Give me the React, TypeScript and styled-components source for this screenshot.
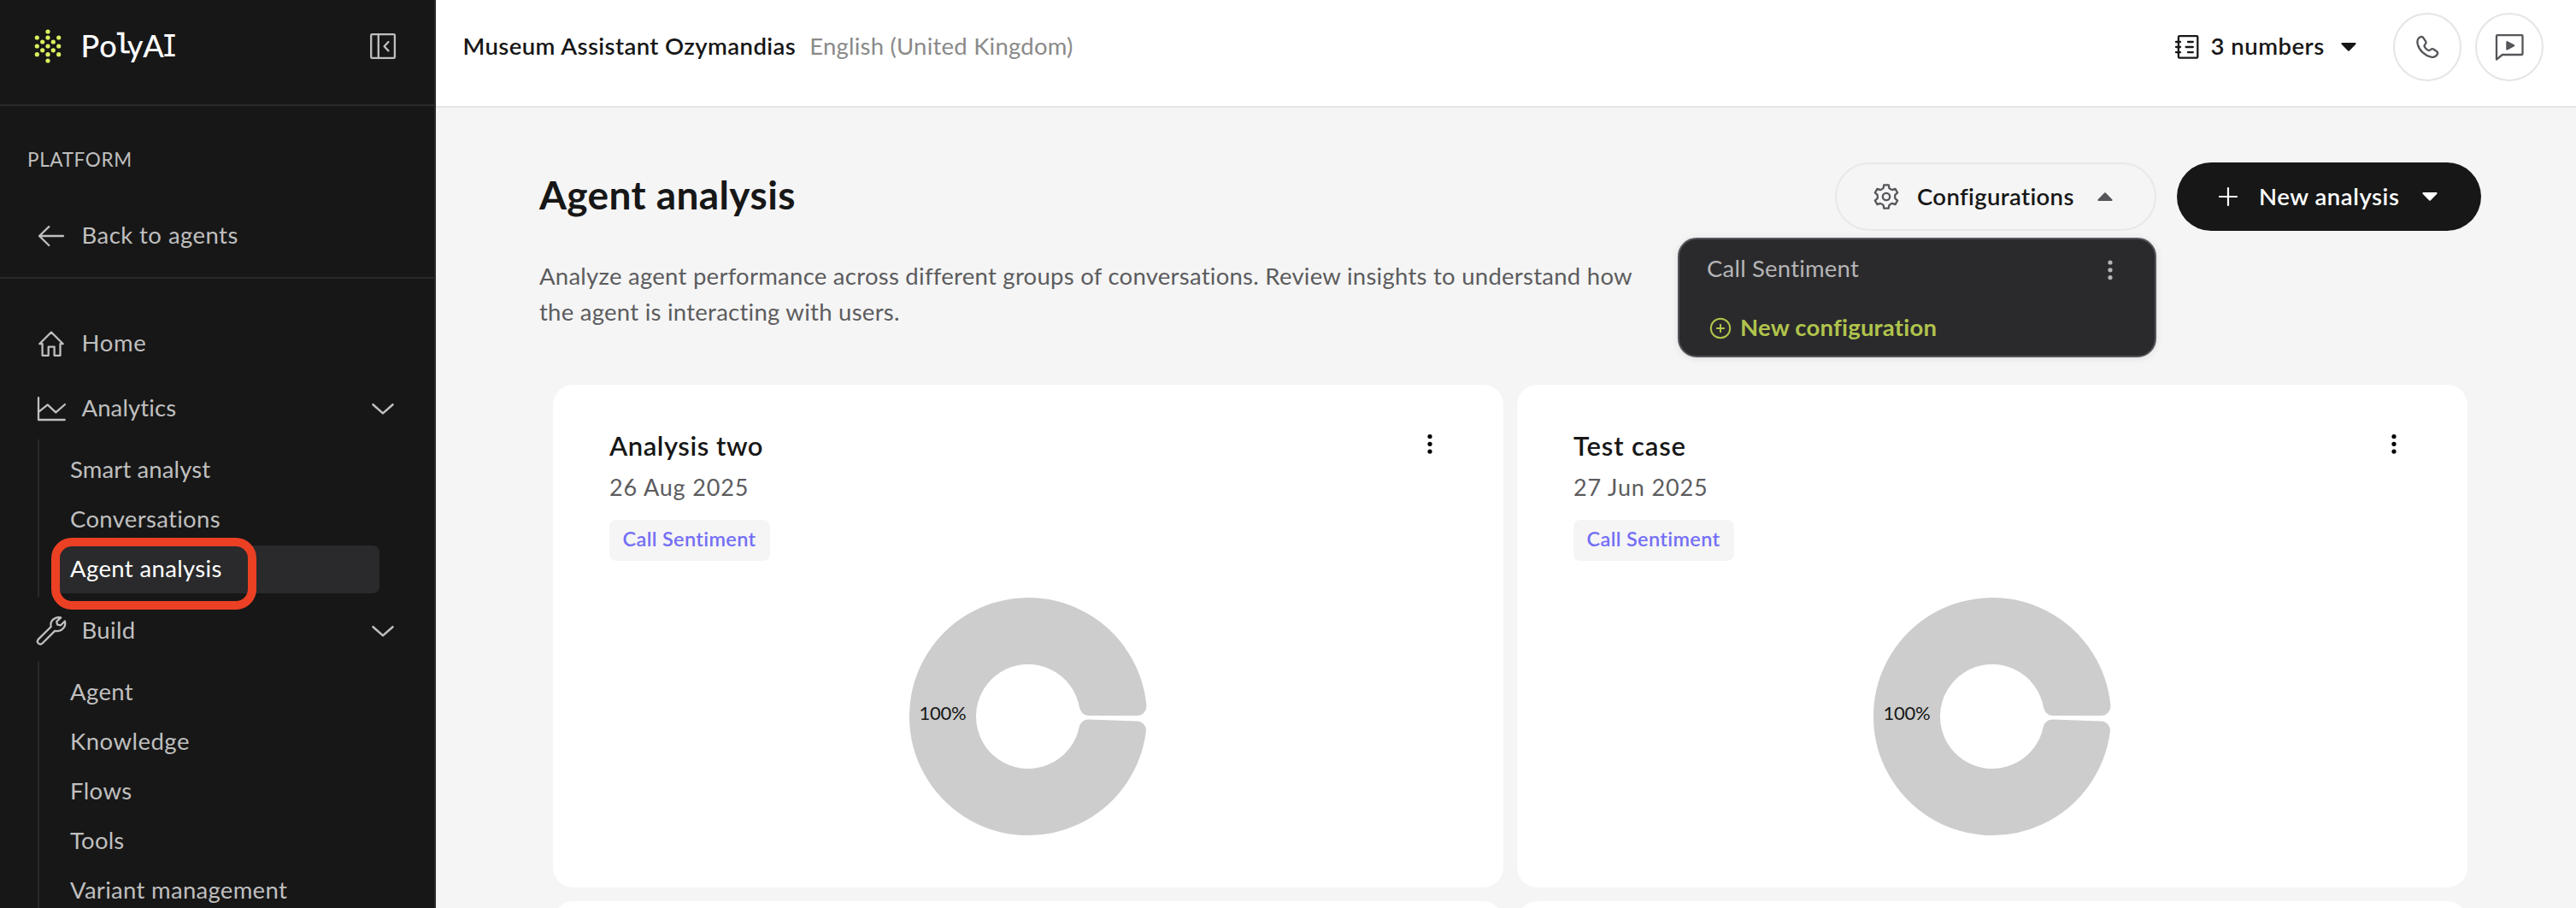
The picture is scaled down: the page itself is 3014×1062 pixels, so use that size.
import React from "react";
import styled, { createGlobalStyle } from "styled-components";

const GlobalStyle = createGlobalStyle`
  *, *::before, *::after { box-sizing: border-box; }
  body { margin: 0; background: #f5f5f5; font-family: Lato, "Open Sans", sans-serif; }
  button { font: inherit; border: 0; background: none; padding: 0; color: inherit; }
  h1, h2, p { margin: 0; font-weight: 400; }
  svg { display: block; flex: none; overflow: visible; }
`;

const Shell = styled.div`
  display: flex;
  width: 3014px;
  height: 1062px;
  overflow: hidden;
`;

/* ---------- Sidebar ---------- */

const Sidebar = styled.aside`
  flex: none;
  width: 510px;
  height: 100%;
  overflow: hidden;
  background: #171717;
  border-right: 2px solid #2a2a2c;
  color: #bfbfbf;
`;

const Brand = styled.div`
  display: flex;
  align-items: center;
  height: 124px;
  padding: 0 43px 14px 40px;
  border-bottom: 2px solid #2a2a2c;
`;

const Wordmark = styled.div`
  display: flex;
  margin: 0 auto 0 23px;
  padding-bottom: 2px;
  color: #fff;
  line-height: 44px;
`;

const Glyph = styled.span<{ $w: number; $face?: string; $size?: number; $weight?: number; $edge?: number }>`
  display: flex;
  justify-content: center;
  align-items: baseline;
  width: ${(p) => p.$w}px;
  font-family: ${(p) => p.$face ?? "Lato"}, sans-serif;
  font-size: ${(p) => p.$size ?? 36}px;
  font-weight: ${(p) => p.$weight ?? 500};
  font-feature-settings: "cv08";
  -webkit-text-stroke: ${(p) => p.$edge ?? 0}px #fff;
`;

const PlatformSection = styled.section`
  height: 202px;
  padding: 49px 42px 0 32px;
  border-bottom: 2px solid #2a2a2c;
`;

const SectionLabel = styled.div`
  margin-bottom: 47px;
  font-size: 22.5px;
  line-height: 28px;
  letter-spacing: 0.65px;
`;

const Label = styled.span<{ $ls: number }>`
  font-size: 27.5px;
  letter-spacing: ${(p) => p.$ls}px;
  white-space: nowrap;
`;

const NavRow = styled.div<{ $flush?: boolean }>`
  display: flex;
  align-items: center;
  height: 56px;
  padding: ${(p) => (p.$flush ? "0 0 0 11px" : "0 43px")};
  ${Label} {
    margin: 0 auto 0 18.5px;
    padding-bottom: 2.5px;
  }
`;

const Nav = styled.nav`
  padding-top: 48px;
`;

const Spacer = styled.div<{ $h: number }>`
  height: ${(p) => p.$h}px;
`;

const SubNav = styled.div`
  display: flex;
  flex-direction: column;
  gap: 2px;
  margin: 8px 64px 12px 44px;
  padding: 8px 0 4px 20px;
  border-left: 2px solid #2a2a2c;
`;

const SubItem = styled.div<{ $active?: boolean }>`
  position: relative;
  display: flex;
  align-items: center;
  height: 56px;
  padding: 0 0 3.5px 16px;
  border-radius: 8px;
  background: ${(p) => (p.$active ? "#2a2a2c" : "transparent")};
  color: ${(p) => (p.$active ? "#fff" : "inherit")};
`;

const Highlight = styled.span`
  position: absolute;
  left: -6px;
  top: -9px;
  width: 240px;
  height: 84px;
  border: 10px solid #ec4024;
  border-radius: 24px;
`;

/* ---------- Main area ---------- */

const Main = styled.main`
  flex: 1;
  min-width: 0;
  display: flex;
  flex-direction: column;
`;

const TopBar = styled.header`
  flex: none;
  display: flex;
  align-items: center;
  height: 126px;
  padding: 0 38px 14px 31.5px;
  background: #fff;
  border-bottom: 2px solid #e5e5e5;
`;

const AgentName = styled.span`
  padding-bottom: 4px;
  font-size: 27.5px;
  font-weight: 600;
  letter-spacing: 0.42px;
  color: #171717;
`;

const Locale = styled.span`
  margin: 0 auto 0 16px;
  padding-bottom: 4px;
  font-size: 27.5px;
  letter-spacing: 0.22px;
  color: #8a8a8a;
`;

const NumbersButton = styled.button`
  display: flex;
  align-items: center;
  width: 214px;
  margin-right: 43px;
  color: #171717;
  span {
    margin: 0 auto 0 11.5px;
    padding-bottom: 3px;
    font-size: 27.5px;
    font-weight: 600;
    letter-spacing: 0.5px;
  }
`;

const CircleButton = styled.button`
  display: flex;
  align-items: center;
  justify-content: center;
  width: 80px;
  height: 80px;
  border: 2px solid #e5e5e5;
  border-radius: 50%;
  color: #55555a;
  & + & { margin-left: 16px; }
`;

const Content = styled.div`
  flex: 1;
  min-height: 0;
  overflow: hidden;
  padding: 64px 111px 0 121px;
`;

const TitleRow = styled.div`
  display: flex;
  align-items: center;
  height: 80px;
`;

const Title = styled.h1`
  margin-right: auto;
  padding-bottom: 6px;
  font-size: 46px;
  font-weight: 700;
  letter-spacing: 0.4px;
  color: #171717;
`;

const Description = styled.p`
  width: 1300px;
  height: 148px;
  margin-top: 32px;
  font-size: 27.5px;
  line-height: 41.6px;
  letter-spacing: 0.26px;
  color: #5c5c5e;
`;

const MenuAnchor = styled.div`
  position: relative;
  margin-right: 24px;
`;

const PillButton = styled.button<{ $dark?: boolean }>`
  display: flex;
  align-items: center;
  width: ${(p) => (p.$dark ? 356 : 376)}px;
  height: 80px;
  padding: ${(p) => (p.$dark ? "0 51px 0 47px" : "0 49px 0 42px")};
  border: ${(p) => (p.$dark ? "0" : "2px solid #e8e8e8")};
  border-radius: 40px;
  background: ${(p) => (p.$dark ? "#171717" : "transparent")};
  color: ${(p) => (p.$dark ? "#fff" : "#171717")};
  font-size: 27.5px;
  font-weight: 600;
  letter-spacing: ${(p) => (p.$dark ? 0.55 : 0.35)}px;
  span {
    margin: 0 auto 0 ${(p) => (p.$dark ? 23 : 20)}px;
    padding-bottom: 1px;
  }
`;

const Menu = styled.div`
  position: absolute;
  z-index: 2;
  top: 88px;
  right: 0;
  width: 560px;
  height: 140px;
  padding: 0 38px 0 32px;
  border: 2px solid #55555c;
  border-radius: 22px;
  background: #2a2a2c;
  box-shadow: 0 1px 8px rgba(0, 0, 0, 0.1);
`;

const MenuItem = styled.div<{ $accent?: boolean }>`
  display: flex;
  align-items: center;
  height: 68px;
  color: ${(p) => (p.$accent ? "#b0c44c" : "#b5b5b6")};
  font-size: 27.5px;
  font-weight: ${(p) => (p.$accent ? 700 : 400)};
  letter-spacing: ${(p) => (p.$accent ? 0.2 : 0.2)}px;
  span {
    margin-right: auto;
    padding-bottom: ${(p) => (p.$accent ? 0 : 1)}px;
  }
  svg + span { margin-left: 10px; }
`;

/* ---------- Cards ---------- */

const CardGrid = styled.div`
  display: grid;
  grid-template-columns: repeat(2, 1112px);
  grid-auto-rows: 588px;
  gap: 16px;
  padding: 0 16px;
`;

const Card = styled.article`
  display: flex;
  flex-direction: column;
  padding: 52px 66px 0;
  border-radius: 24px;
  background: #fff;
`;

const CardHead = styled.div`
  display: flex;
  align-items: center;
  justify-content: space-between;
  height: 40px;
`;

const CardTitle = styled.h2<{ $ls: number }>`
  font-size: 31px;
  line-height: 40px;
  padding-bottom: 2px;
  font-weight: 600;
  letter-spacing: ${(p) => p.$ls}px;
  color: #171717;
`;

const CardDate = styled.div`
  margin: 12px 0 22px;
  font-size: 27px;
  line-height: 32px;
  letter-spacing: 0.85px;
  color: #5c5c5e;
`;

const Tag = styled.span`
  align-self: flex-start;
  width: 188px;
  height: 48px;
  padding-left: 15.5px;
  border-radius: 8px;
  background: #f5f5f5;
  font-size: 23.5px;
  line-height: 44px;
  font-weight: 600;
  letter-spacing: 0.36px;
  color: #746ff5;
`;

const ChartBox = styled.div`
  display: flex;
  justify-content: center;
  margin-top: 41px;
`;

/* ---------- Drawings ---------- */

const dots = [
  [16, 3], [3.3, 10], [16, 10], [28.7, 10], [9.7, 15], [22.3, 15], [3.3, 20], [16, 20],
  [28.7, 20], [9.7, 24.8], [22.3, 24.8], [3.3, 29.7], [16, 29.7], [28.7, 29.7], [16, 37],
];

const LogoMark = () => (
  <svg width="32" height="40" fill="#dcf05f">
    {dots.map(([x, y]) => <circle key={`${x}-${y}`} cx={x} cy={y} r="2.6" />)}
  </svg>
);

const stroke = {
  fill: "none",
  stroke: "currentColor",
  strokeWidth: 2.3,
  strokeLinecap: "round" as const,
  strokeLinejoin: "round" as const,
};

const CollapseIcon = () => (
  <svg width="34" height="34" {...stroke}>
    <rect x="3.2" y="3.2" width="27.7" height="27.7" rx="1.2" />
    <path d="M11.8 3.2V31M23.4 12L18.6 17.3L23.4 22.4" />
  </svg>
);

const BackIcon = () => (
  <svg width="34" height="34" {...stroke}>
    <path d="M31 17H3.2M14.3 6.2L3 17L14.3 28" />
  </svg>
);

const HomeIcon = () => (
  <svg width="34" height="34" {...stroke}>
    <path transform="translate(1.7 1.7)" d="M1.5 15.5L15.3 1.8L29 15.5H25.8V29.1H18.9V19H12V29.1H4.9V15.5Z" />
  </svg>
);

const AnalyticsIcon = () => (
  <svg width="34" height="34" {...stroke}>
    <path transform="translate(.7 3)" d="M1.3 1.2V27H32M2 17.3L12 9.4L21.6 18.4L32.3 9" />
  </svg>
);

const WrenchIcon = () => (
  <svg width="34" height="34" {...stroke}>
    <path
      transform="translate(-.3 -.3)"
      d="M28.5 1.6C22.5 .2 15.2 4.6 17 12.3L2 27.2C.8 28.6 .9 30.4 2.2 31.8C3.6 33 5.6 33 6.8 31.8L21.5 17.2C29.2 18.8 35 12.5 33.2 5.8L28.4 10.6L24.4 9.9L23.6 6.2Z"
    />
  </svg>
);

const ChevronIcon = () => (
  <svg width="34" height="34" {...stroke} strokeWidth={2.5}>
    <path d="M5.5 12.2L17 22.4L28.5 12.2" />
  </svg>
);

const NotebookIcon = () => (
  <svg width="32" height="32" {...stroke} strokeWidth={2.3}>
    <rect x="5.9" y="3.1" width="22.4" height="25.6" rx="1.2" />
    <path d="M3 10H8M3 16H8M3 22.2H8M17 10H22.8M14.6 16H22.8M17 22.2H22.8" />
  </svg>
);

const PhoneIcon = () => (
  <svg width="26" height="26" {...stroke}>
    <path d="M4.4 1.5C6 .7 7.8 1.2 8.8 2.8L11 6.2C12 7.8 11.6 8.9 10.4 10C9.3 11 9.4 12.2 10.2 13.4C11.2 15 12.4 16.1 14 16.8C15.2 17.3 16 17 17 16C18.2 14.9 19.3 14.8 20.6 15.7L23.9 18C25.3 19 25.5 20.4 24.7 21.7C22.9 24.4 20.6 25.5 17.4 24.7C9.8 22.8 3.5 16.8 1.7 9.4C1 6 1.4 3.2 4.4 1.5Z" />
  </svg>
);

const ChatIcon = () => (
  <svg width="34" height="34" {...stroke}>
    <path d="M2 4.2Q2 3.2 3 3.2H31.5Q32.5 3.2 32.5 4.2V25Q32.5 26 31.5 26H8.8L2 31.6Z" />
    <path d="M14.4 11.2L22.2 15.2L14.4 19.4Z" fill="currentColor" />
  </svg>
);

const gearPath = Array.from({ length: 6 }, (_, i) => {
  const a = (i * Math.PI) / 3;
  const at = (x: number, y: number) =>
    `${(16 + x * Math.cos(a) - y * Math.sin(a)).toFixed(2)} ${(16 + x * Math.sin(a) + y * Math.cos(a)).toFixed(2)}`;
  return `${i ? "L" : "M"}${at(-3.4, -10)}L${at(-2.7, -13.7)}L${at(2.7, -13.7)}L${at(3.4, -10)}Q${at(4.6, -8.6)} ${at(6.9, -8)}`;
}).join("");

const GearIcon = () => (
  <svg width="32" height="32" {...stroke} stroke="#55555a">
    <path d={`${gearPath}Z`} />
    <circle cx="16" cy="16" r="4.2" />
  </svg>
);

const PlusIcon = () => (
  <svg width="26" height="26" {...stroke} strokeWidth={2.2}>
    <path d="M13 3V23M3 13H23" />
  </svg>
);

const PlusCircleIcon = () => (
  <svg width="29" height="26" {...stroke} strokeWidth={2}>
    <circle cx="16" cy="15" r="11.2" />
    <path d="M16 10.8V19.2M11.8 15H20.2" />
  </svg>
);

const Caret = ({ up, color = "currentColor" }: { up?: boolean; color?: string }) => (
  <svg width="18" height="10" fill={color} stroke={color} strokeWidth="2" strokeLinejoin="round">
    <path d={up ? "M1.4 9L9 1.2L16.6 9Z" : "M1.4 1L9 8.8L16.6 1Z"} />
  </svg>
);

const MoreIcon = ({ width = 40, top = 8.5 }: { width?: number; top?: number }) => (
  <svg width={width} height="40" fill="currentColor">
    {[0, 8.8, 17.6].map((y) => <circle key={y} cx={width / 2} cy={top + y} r="2.6" />)}
  </svg>
);

/* Ring sector from 0 to 358 degrees with rounded corners at both ends. */
const ringPath = (() => {
  const c = 141, R = 140, r = 60, k = 12, end = (358 * Math.PI) / 180;
  const p = (d: number, a: number) => `${(c + d * Math.cos(a)).toFixed(2)} ${(c - d * Math.sin(a)).toFixed(2)}`;
  const ao = Math.asin(k / (R - k));
  const ai = Math.asin(k / (r + k));
  const lo = Math.sqrt((R - k) ** 2 - k ** 2);
  const li = Math.sqrt((r + k) ** 2 - k ** 2);
  return [
    `M${p(lo, 0)}`,
    `A${k} ${k} 0 0 0 ${p(R, ao)}`,
    `A${R} ${R} 0 1 0 ${p(R, end - ao)}`,
    `A${k} ${k} 0 0 0 ${p(lo, end)}`,
    `L${p(li, end)}`,
    `A${k} ${k} 0 0 0 ${p(r, end - ai)}`,
    `A${r} ${r} 0 1 1 ${p(r, ai)}`,
    `A${k} ${k} 0 0 0 ${p(li, 0)}Z`,
  ].join("");
})();

const ChartText = styled.text`
  font-size: 22px;
  letter-spacing: -0.2px;
  fill: #171717;
`;

const Donut = ({ value }: { value: string }) => (
  <svg width="282" height="282">
    <path d={ringPath} fill="#cdcdcd" stroke="#fff" strokeWidth="2" />
    <ChartText x="41" y="145" textAnchor="middle">{value}</ChartText>
  </svg>
);

/* ---------- Data ---------- */

type Item = { text: string; ls: number; active?: boolean };

const analytics: Item[] = [
  { text: "Smart analyst", ls: 0.12 },
  { text: "Conversations", ls: 0.32 },
  { text: "Agent analysis", ls: 0.36, active: true },
];

const build: Item[] = [
  { text: "Agent", ls: 0.35 },
  { text: "Knowledge", ls: 0.48 },
  { text: "Flows", ls: 0.4 },
  { text: "Tools", ls: 0.2 },
  { text: "Variant management", ls: 0.3 },
];

const cards = [
  { title: "Analysis two", ls: 0.55, date: "26 Aug 2025" },
  { title: "Test case", ls: 0.85, date: "27 Jun 2025" },
];

const SubList = ({ items }: { items: Item[] }) => (
  <SubNav>
    {items.map((it) => (
      <SubItem key={it.text} $active={it.active}>
        <Label $ls={it.ls}>{it.text}</Label>
        {it.active && <Highlight />}
      </SubItem>
    ))}
  </SubNav>
);

export default function App() {
  return (
    <Shell>
      <GlobalStyle />
      <Sidebar>
        <Brand>
          <LogoMark />
          <Wordmark>
            <Glyph $w={21}>P</Glyph>
            <Glyph $w={21}>o</Glyph>
            <Glyph $w={12} $face='"Liberation Mono"' $size={34} $edge={0.7}>l</Glyph>
            <Glyph $w={18}>y</Glyph>
            <Glyph $w={25}>A</Glyph>
            <Glyph $w={13} $face="Inter" $size={35} $weight={400}>I</Glyph>
          </Wordmark>
          <CollapseIcon />
        </Brand>
        <PlatformSection>
          <SectionLabel>PLATFORM</SectionLabel>
          <NavRow $flush>
            <BackIcon />
            <Label $ls={0.45}>Back to agents</Label>
          </NavRow>
        </PlatformSection>
        <Nav>
          <NavRow>
            <HomeIcon />
            <Label $ls={0.65}>Home</Label>
          </NavRow>
          <Spacer $h={20} />
          <NavRow>
            <AnalyticsIcon />
            <Label $ls={0.1}>Analytics</Label>
            <ChevronIcon />
          </NavRow>
          <SubList items={analytics} />
          <NavRow>
            <WrenchIcon />
            <Label $ls={0.35}>Build</Label>
            <ChevronIcon />
          </NavRow>
          <SubList items={build} />
        </Nav>
      </Sidebar>
      <Main>
        <TopBar>
          <AgentName>Museum Assistant Ozymandias</AgentName>
          <Locale>English (United Kingdom)</Locale>
          <NumbersButton>
            <NotebookIcon />
            <span>3 numbers</span>
            <Caret />
          </NumbersButton>
          <CircleButton><PhoneIcon /></CircleButton>
          <CircleButton><ChatIcon /></CircleButton>
        </TopBar>
        <Content>
          <TitleRow>
            <Title>Agent analysis</Title>
            <MenuAnchor>
              <PillButton>
                <GearIcon />
                <span>Configurations</span>
                <Caret up color="#55555a" />
              </PillButton>
              <Menu>
                <MenuItem>
                  <span>Call Sentiment</span>
                  <MoreIcon width={28} top={13} />
                </MenuItem>
                <MenuItem $accent>
                  <PlusCircleIcon />
                  <span>New configuration</span>
                </MenuItem>
              </Menu>
            </MenuAnchor>
            <PillButton $dark>
              <PlusIcon />
              <span>New analysis</span>
              <Caret />
            </PillButton>
          </TitleRow>
          <Description>
            Analyze agent performance across different groups of conversations. Review insights to
            understand how the agent is interacting with users.
          </Description>
          <CardGrid>
            {cards.map((c) => (
              <Card key={c.title}>
                <CardHead>
                  <CardTitle $ls={c.ls}>{c.title}</CardTitle>
                  <MoreIcon />
                </CardHead>
                <CardDate>{c.date}</CardDate>
                <Tag>Call Sentiment</Tag>
                <ChartBox><Donut value="100%" /></ChartBox>
              </Card>
            ))}
            <Card />
            <Card />
          </CardGrid>
        </Content>
      </Main>
    </Shell>
  );
}
